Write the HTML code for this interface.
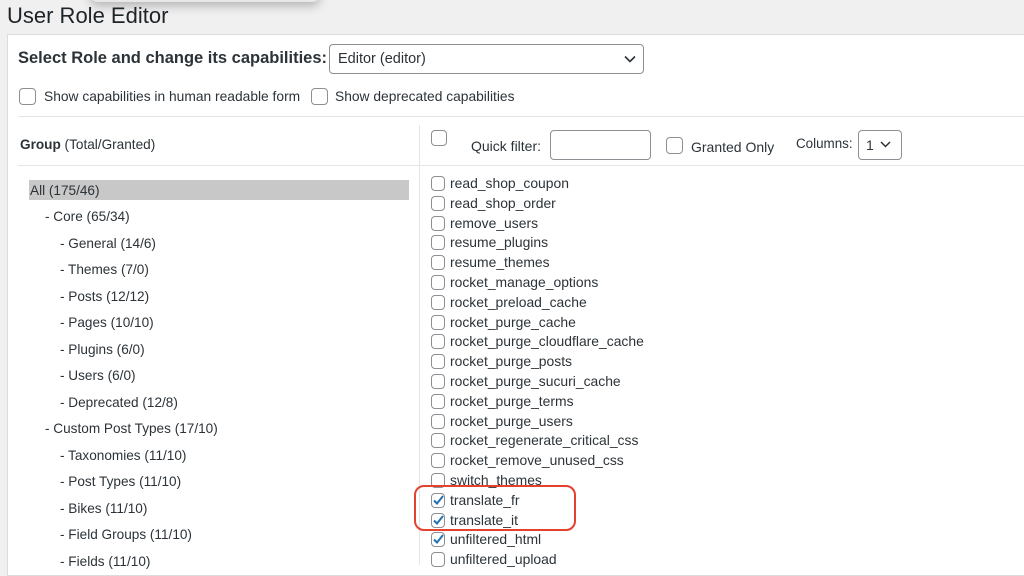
<!DOCTYPE html>
<html><head><style>
body{margin:0;width:1024px;height:560px;overflow:hidden;background:#f0f0f1;font-family:"Liberation Sans",sans-serif;color:#2c3338;position:relative}
.a{position:absolute;white-space:nowrap}
.cb{position:absolute;width:14px;height:14px;border:1px solid #8c8f94;border-radius:4px;background:#fff;box-sizing:border-box}
.cap{position:absolute;left:450px;font-size:13.9px;color:#2c3338;white-space:nowrap}
.grp{position:absolute;font-size:13.6px;color:#2c3338;white-space:nowrap}
</style></head><body>
<div class="a" style="left:90px;top:-14px;width:230px;height:16px;border-radius:10px;box-shadow:0 4px 10px rgba(0,0,0,.25);background:#e8e8e8"></div>
<div class="a" style="left:7px;top:3px;font-size:22px;color:#1d2327">User Role Editor</div>
<div class="a" style="left:7px;top:34px;width:1030px;height:540px;background:#fff;border:1px solid #dcdcde"></div>
<div class="a" style="left:18px;top:49px;font-size:16.5px;font-weight:bold;color:#2c3338">Select Role and change its capabilities:</div>
<div class="a" style="left:329px;top:44px;width:315px;height:30px;border:1px solid #8c8f94;border-radius:4px;box-sizing:border-box;background:#fff"></div>
<div class="a" style="left:338px;top:51px;font-size:14.5px">Editor (editor)</div>
<svg class="a" style="left:624px;top:55px" width="12" height="8"><path d="M1 1.5L6 6.5L11 1.5" stroke="#2c3338" stroke-width="1.6" fill="none"/></svg>
<div class="cb" style="left:19px;top:88px;width:17px;height:17px"></div>
<div class="a" style="left:44px;top:89px;font-size:13.8px">Show capabilities in human readable form</div>
<div class="cb" style="left:311px;top:88px;width:17px;height:17px"></div>
<div class="a" style="left:335px;top:89px;font-size:13.8px">Show deprecated capabilities</div>
<div class="a" style="left:18px;top:116px;width:1010px;height:1px;background:#e5e5e5"></div>
<div class="a" style="left:419px;top:125px;width:1px;height:440px;background:#e5e5e5"></div>
<div class="a" style="left:18px;top:165px;width:1010px;height:1px;background:#e5e5e5"></div>
<div class="a" style="left:20px;top:137px;font-size:13.6px"><b>Group</b> (Total/Granted)</div>
<div class="cb" style="left:431px;top:130px;width:16px;height:16px"></div>
<div class="a" style="left:471px;top:138px;font-size:14px">Quick filter:</div>
<div class="a" style="left:550px;top:130px;width:101px;height:30px;border:1px solid #8c8f94;border-radius:4px;box-sizing:border-box"></div>
<div class="cb" style="left:666px;top:137px;width:17px;height:17px"></div>
<div class="a" style="left:691px;top:139px;font-size:14px">Granted Only</div>
<div class="a" style="left:796px;top:136px;font-size:13.4px">Columns:</div>
<div class="a" style="left:858px;top:130px;width:44px;height:30px;border:1px solid #8c8f94;border-radius:4px;box-sizing:border-box"></div>
<div class="a" style="left:866px;top:137px;font-size:14px">1</div>
<svg class="a" style="left:880px;top:141px" width="11" height="7"><path d="M1 1L5.5 5.5L10 1" stroke="#2c3338" stroke-width="1.5" fill="none"/></svg>
<div class="a" style="left:29px;top:180px;width:380px;height:20px;background:#c8c8c8"></div>
<div class="grp" style="left:30px;top:183px">All (175/46)</div>
<div class="grp" style="left:45px;top:209px">- Core (65/34)</div>
<div class="grp" style="left:60px;top:236px">- General (14/6)</div>
<div class="grp" style="left:60px;top:262px">- Themes (7/0)</div>
<div class="grp" style="left:60px;top:289px">- Posts (12/12)</div>
<div class="grp" style="left:60px;top:315px">- Pages (10/10)</div>
<div class="grp" style="left:60px;top:342px">- Plugins (6/0)</div>
<div class="grp" style="left:60px;top:368px">- Users (6/0)</div>
<div class="grp" style="left:60px;top:395px">- Deprecated (12/8)</div>
<div class="grp" style="left:45px;top:421px">- Custom Post Types (17/10)</div>
<div class="grp" style="left:60px;top:448px">- Taxonomies (11/10)</div>
<div class="grp" style="left:60px;top:474px">- Post Types (11/10)</div>
<div class="grp" style="left:60px;top:501px">- Bikes (11/10)</div>
<div class="grp" style="left:60px;top:527px">- Field Groups (11/10)</div>
<div class="grp" style="left:60px;top:554px">- Fields (11/10)</div>
<div id="caps"></div>
<div class="a" style="left:414px;top:485px;width:162px;height:46px;border:2px solid #e4412f;border-radius:10px;box-sizing:border-box"></div>
<script>
var c=["read_shop_coupon","read_shop_order","remove_users","resume_plugins","resume_themes","rocket_manage_options","rocket_preload_cache","rocket_purge_cache","rocket_purge_cloudflare_cache","rocket_purge_posts","rocket_purge_sucuri_cache","rocket_purge_terms","rocket_purge_users","rocket_regenerate_critical_css","rocket_remove_unused_css","switch_themes","translate_fr","translate_it","unfiltered_html","unfiltered_upload"];
var h="";c.forEach(function(n,i){var y=175+i*19.8;var chk=i>=16&&i<=18;
h+='<div class="cb" style="left:431px;top:'+(y+1)+'px;width:14px;height:15px"></div>';
if(chk)h+='<svg class="a" style="left:432px;top:'+(y+2)+'px" width="13" height="12"><path d="M2 6.5L5 9.5L11 2" stroke="#2271b1" stroke-width="2" fill="none"/></svg>';
h+='<div class="cap" style="top:'+(y)+'px">'+n+'</div>';});
document.getElementById("caps").innerHTML=h;
</script>
</body></html>
